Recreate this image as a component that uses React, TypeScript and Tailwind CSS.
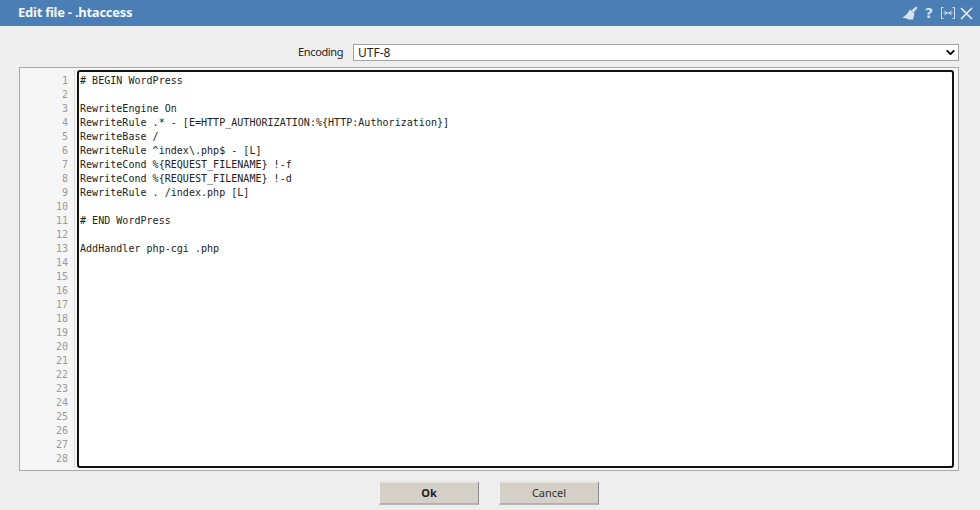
import { ChevronDown } from "lucide-react"

const codeLines = [
  "# BEGIN WordPress",
  "",
  "RewriteEngine On",
  "RewriteRule .* - [E=HTTP_AUTHORIZATION:%{HTTP:Authorization}]",
  "RewriteBase /",
  "RewriteRule ^index\\.php$ - [L]",
  "RewriteCond %{REQUEST_FILENAME} !-f",
  "RewriteCond %{REQUEST_FILENAME} !-d",
  "RewriteRule . /index.php [L]",
  "",
  "# END WordPress",
  "",
  "AddHandler php-cgi .php",
]

const lineNumbers = Array.from({ length: 28 }, (_, i) => i + 1)

function BroomIcon() {
  return (
    <svg width="16" height="14" viewBox="0 0 16 14" fill="#d5e1ef">
      <path d="M9.5 4.5 L14 0.5 L15.5 2 L11.5 6.5 Z" />
      <path d="M8 3.5 L12.5 7.5 L11 13.5 L6.5 13.5 L4.5 12.5 L0.5 11.5 C3.5 10 6 7 8 3.5 Z" />
    </svg>
  )
}

function ExpandIcon() {
  return (
    <svg width="16" height="14" viewBox="0 0 16 14" fill="none" stroke="#d5e1ef" strokeWidth="1">
      <path d="M3.5 1.5 H1.5 V12.5 H3.5" />
      <path d="M12.5 1.5 H14.5 V12.5 H12.5" />
      <path d="M3.5 7 H12.5" />
      <path d="M4.5 5 L7 7 L4.5 9 M11.5 5 L9 7 L11.5 9" />
    </svg>
  )
}

function CloseIcon() {
  return (
    <svg width="13" height="13" viewBox="0 0 13 13" fill="none" stroke="#e4ecf5" strokeWidth="1.6">
      <path d="M1 1 L12 12 M12 1 L1 12" />
    </svg>
  )
}

export default function App() {
  return (
    <div className="flex h-[510px] w-[980px] flex-col overflow-hidden bg-[#eeeeee] font-['Open_Sans','Liberation_Sans',sans-serif]">
      {/* title bar */}
      <div className="flex h-[26px] shrink-0 items-center justify-between bg-[#4c7eb6] pl-[18px] pr-[7px]">
        <span className="font-['Noto_Sans',sans-serif] text-[13px] font-bold tracking-[-0.25px] text-[#f4f7fb]">Edit file - .htaccess</span>
        <div className="flex items-center">
          <BroomIcon />
          <span className="ml-[7px] mr-[7px] font-['DejaVu_Sans',sans-serif] text-[14px] font-bold leading-none text-[#d5e1ef]">?</span>
          <ExpandIcon />
          <span className="ml-[4px]"><CloseIcon /></span>
        </div>
      </div>

      {/* encoding */}
      <div className="mt-[18px] flex h-[17px] shrink-0 items-center pr-[21px]">
        <span className="ml-[298px] w-[55px] font-['Noto_Sans',sans-serif] text-[11px] tracking-[-0.35px] text-[#222222]">Encoding</span>
        <div className="flex h-[17px] flex-1 items-center justify-between border border-[#a3a3a3] bg-white pl-[4px] pr-[1px]">
          <span className="font-['Noto_Sans',sans-serif] text-[12px] text-[#222222]">UTF-8</span>
          <ChevronDown size={13} strokeWidth={3.5} className="text-black" />
        </div>
      </div>

      {/* editor */}
      <div className="ml-[19px] mr-[21px] mt-[6px] flex h-[404px] shrink-0 border border-[#a8a8a8] bg-[#f6f6f6] pb-[2px] pt-[2px]">
        <div className="flex w-[57px] shrink-0 pr-[2px]">
          <div className="flex-1 border-r border-[#dddddd] pr-[6px] pt-[4px] text-right font-['DejaVu_Sans_Mono',monospace] text-[10px] leading-[14px] text-[#9a9a9a]">
            {lineNumbers.map((n) => (
              <div key={n}>{n}</div>
            ))}
          </div>
        </div>
        <div className="mr-[4px] flex-1 rounded-[3px] border-[2px] border-[#111111] bg-white pl-[1px] pt-[2px] font-['DejaVu_Sans_Mono',monospace] text-[10px] leading-[14px] tracking-[0.03px] text-[#222222]">
          {codeLines.map((line, i) => (
            <div key={i} className="h-[14px] whitespace-pre">{line}</div>
          ))}
        </div>
      </div>

      {/* buttons */}
      <div className="mt-[10px] flex justify-center gap-[20px] pr-[2px]">
        <button className="h-[23px] w-[100px] translate-y-[0.5px] border border-[#f4f2ee] border-b-[#8f8f8f] border-r-[#8f8f8f] bg-[#d4d0c8] font-['Noto_Sans',sans-serif] text-[11px] font-bold text-[#222222]">Ok</button>
        <button className="h-[23px] w-[100px] translate-y-[0.5px] border border-[#f4f2ee] border-b-[#8f8f8f] border-r-[#8f8f8f] bg-[#d4d0c8] font-['Noto_Sans',sans-serif] text-[11px] text-[#333333]">Cancel</button>
      </div>
    </div>
  )
}
